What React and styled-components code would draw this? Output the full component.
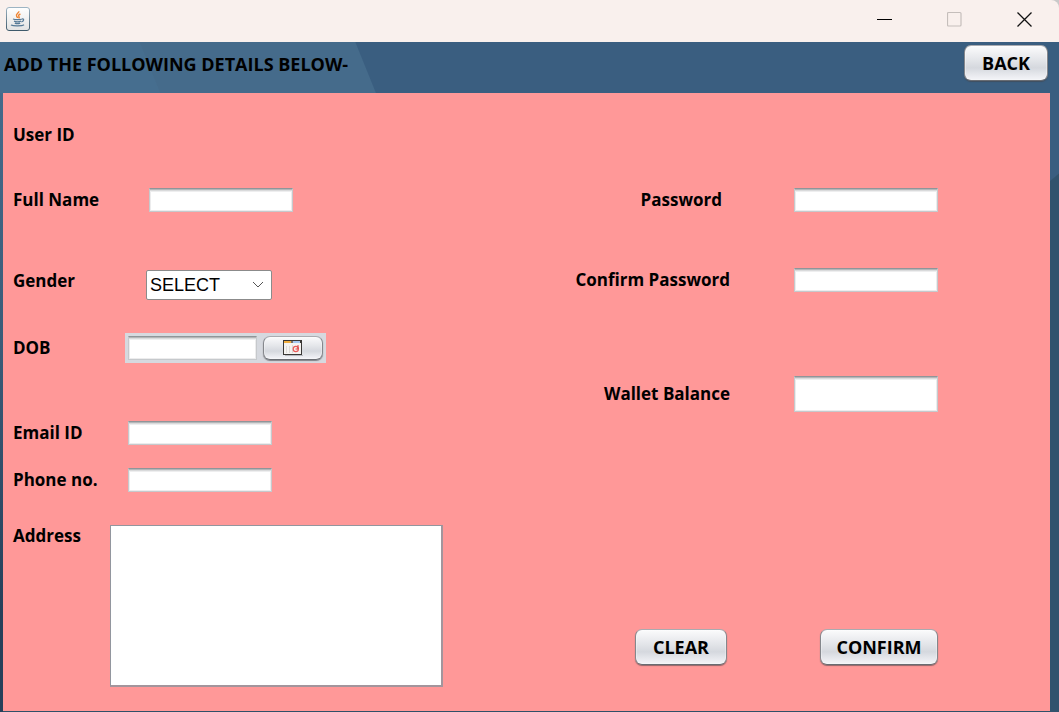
import React from "react";
import styled, { createGlobalStyle } from "styled-components";

const GlobalStyle = createGlobalStyle`
  * { box-sizing: border-box; }
  body {
    margin: 0;
    background: #c9c9c9;
    color: #000;
    font: 700 17px/22px "Open Sans", "Noto Sans", sans-serif;
  }
`;

const Window = styled.div`
  display: flex;
  flex-direction: column;
  min-height: 100vh;
`;

const TitleBar = styled.header`
  display: flex;
  align-items: center;
  justify-content: space-between;
  height: 42px;
  padding: 0 22px 4px 6px;
  background: #f9f0ed;
  border-top-right-radius: 8px;
`;

const WindowControls = styled.div`
  display: flex;
  align-items: center;
  gap: 46px;
`;

const ControlButton = styled.button`
  display: flex;
  align-items: center;
  justify-content: center;
  width: 24px;
  height: 24px;
  padding: 0;
  border: 0;
  background: none;
`;

const Desktop = styled.main`
  flex: 1;
  display: flex;
  flex-direction: column;
  padding: 0 9px 1px 3px;
  background:
    linear-gradient(#466d8e, #3a5b78 45%, #26405a 85%) left top / 3px 100% no-repeat,
    linear-gradient(140deg, #3a5e80 0 106px, #31536d 107px) right top / 9px 100% no-repeat,
    #2f4f69;
`;

const Heading = styled.div`
  display: flex;
  align-items: flex-start;
  justify-content: space-between;
  height: 51px;
  margin: 0 -9px 0 -3px;
  padding: 3px 11px 0 4px;
  background: linear-gradient(68deg, #466e8f 148px, #456b8b 149px 348px, #3a5e80 349px);
`;

const Title = styled.h1`
  margin: 0;
  padding-top: 7px;
  font-size: 18px;
  line-height: 24px;
`;

const PushButton = styled.button`
  display: flex;
  align-items: center;
  justify-content: center;
  width: ${(p) => p.$width}px;
  height: ${(p) => p.$height || 36}px;
  padding: 0;
  border: 1px solid;
  border-color: #a9abb0 #85878c #696c72;
  border-radius: 7px;
  background: linear-gradient(#fbfbfc, #e4e6ea 40%, #d5d8de 64%, #f0f1f5 95%);
  box-shadow: inset 0 0 0 1px rgba(255, 255, 255, 0.3), 0 1px 1px rgba(70, 70, 75, 0.6);
  color: #000;
  font: inherit;
  font-size: 18px;
  line-height: 24px;
`;

const Panel = styled.form`
  flex: 1;
  display: grid;
  grid-template-columns: minmax(0, 1fr) 361px;
  padding: 31px 112px 24px 10px;
  background: #ff9898;
`;

const Column = styled.div`
  display: flex;
  flex-direction: column;
  padding: ${(p) => p.$pad || "0"};
`;

const Row = styled.div`
  display: grid;
  grid-template-columns: ${(p) => p.$label}px auto;
  justify-content: start;
  align-items: ${(p) => p.$align || "center"};
  margin-top: ${(p) => p.$space || 0}px;
`;

const RightRow = styled.div`
  display: flex;
  align-items: center;
  justify-content: flex-end;
  gap: ${(p) => p.$gap || 64}px;
  margin-top: ${(p) => p.$space || 0}px;
`;

const Label = styled.label`
  white-space: nowrap;
`;

const TextField = styled.input`
  width: ${(p) => p.$width || 144}px;
  height: ${(p) => p.$height || 24}px;
  padding: 0 6px;
  border: 1px solid #c6c9cc;
  border-top-color: #8f9599;
  border-radius: 0;
  outline: none;
  background: #fff;
  box-shadow: inset 0 1px 0 #b4b6b8, inset 0 2px 0 #d9dadb, inset 0 3px 0 #eeeeef, inset 1px -1px 0 #ececed, inset -1px 0 0 #ececed;
  font: inherit;
`;

const SelectBox = styled.div`
  position: relative;
  width: 126px;
  height: 30px;

  svg {
    position: absolute;
    top: 11px;
    right: 8px;
    pointer-events: none;
  }
`;

const Select = styled.select`
  appearance: none;
  width: 100%;
  height: 100%;
  padding: 0 24px 0 3px;
  border: 1px solid #8b8b8b;
  border-radius: 2px;
  background: #fff;
  color: #000;
  font: 400 18px/24px "Liberation Sans", sans-serif;
`;

const DatePicker = styled.div`
  display: flex;
  gap: 6px;
  padding: 3px;
  background: #d6d9df;
`;

const TextArea = styled.textarea`
  display: block;
  width: 333px;
  height: 162px;
  padding: 4px;
  border: 1px solid #92969e;
  border-right: 2px solid #a3959c;
  border-bottom: 2px solid #a3959c;
  outline: none;
  resize: none;
  background: #fff;
  font: inherit;
`;

const Actions = styled.div`
  display: flex;
  justify-content: space-between;
  margin-top: auto;
  padding-left: 58px;
`;

const JavaIcon = () => (
  <svg width="24" height="24" viewBox="0 0 24 24" fill="none" aria-hidden="true">
    <defs>
      <linearGradient id="tile" x1="0" y1="0" x2="0" y2="1">
        <stop offset="0" stopColor="#fff" />
        <stop offset="1" stopColor="#e3e3e3" />
      </linearGradient>
      <linearGradient id="edge" x1="0" y1="0" x2="0" y2="1">
        <stop offset="0" stopColor="#9db4c3" />
        <stop offset="1" stopColor="#3f5a6b" />
      </linearGradient>
    </defs>
    <rect x="0.5" y="0.5" width="23" height="23" rx="2.5" fill="url(#tile)" stroke="url(#edge)" />
    <path d="M12.8 4.2c.6 1.8-3.6 2.8-2.2 5 .3.6.9 1 1 1.8M14.4 7c-2 1-2.2 1.6-1.4 2.6.5.6.3 1.2-.4 1.8" stroke="#ee8432" strokeWidth="1.4" />
    <path d="M7 12c2 .8 7 .8 9.2 0M8 14.2c2 .7 5 .7 7 0M8.8 16.2c1.6.6 3.8.6 5.4 0M16 12c2-.6 2.4 2-.6 3" stroke="#567a97" strokeWidth="1.3" />
    <path d="M5 18c2 1.2 11 1.2 13-.2" stroke="#567a97" strokeWidth="1.4" />
  </svg>
);

const CalendarIcon = () => (
  <svg width="20" height="16" viewBox="0 0 20 16" fill="none" aria-hidden="true" shapeRendering="crispEdges">
    <path d="M2 15.5h18V2" stroke="#b8bac0" />
    <rect x="0" y="0" width="19" height="15" fill="#393735" />
    <rect x="1" y="3" width="17" height="11" fill="#f5f3f1" />
    <rect x="1" y="1" width="7" height="2" fill="#f2ae3e" />
    <rect x="8" y="1" width="2" height="2" fill="#77706a" />
    <rect x="10" y="1" width="7" height="2" fill="#a4c6ef" />
    <path d="M3.5 6v7M6.5 6v7M9.5 5v8" stroke="#dedbd8" />
    <g shapeRendering="auto">
      <circle cx="12.8" cy="9" r="2.6" stroke="#ea5a59" strokeWidth="1.2" />
      <path d="M12.5 9h2.5V5" stroke="#d94142" />
    </g>
  </svg>
);

export default function App() {
  return (
    <>
      <GlobalStyle />
      <Window>
        <TitleBar>
          <JavaIcon />
          <WindowControls>
            <ControlButton type="button" aria-label="Minimize">
              <svg width="16" height="16"><path d="M0 8.5h15" stroke="#000" /></svg>
            </ControlButton>
            <ControlButton type="button" aria-label="Maximize" disabled>
              <svg width="16" height="16"><rect x="0.5" y="1.5" width="13.5" height="13.5" rx="1" fill="none" stroke="#c5bebb" strokeWidth="1.2" /></svg>
            </ControlButton>
            <ControlButton type="button" aria-label="Close">
              <svg width="16" height="16"><path d="M0.5 1.5l14 14M14.5 1.5L0.5 15.5" stroke="#111" strokeWidth="1.3" /></svg>
            </ControlButton>
          </WindowControls>
        </TitleBar>
        <Desktop>
          <Heading>
            <Title>ADD THE FOLLOWING DETAILS BELOW-</Title>
            <PushButton type="button" $width={84}>BACK</PushButton>
          </Heading>
          <Panel>
            <Column>
              <Row $label={136}>
                <Label as="span">User ID</Label>
              </Row>
              <Row $label={136} $space={42}>
                <Label htmlFor="name">Full Name</Label>
                <TextField id="name" />
              </Row>
              <Row $label={133} $space={58} $align="start">
                <Label htmlFor="gender">Gender</Label>
                <SelectBox>
                  <Select id="gender">
                    <option>SELECT</option>
                  </Select>
                  <svg width="12" height="8" fill="none"><path d="M1 1l5 5 5-5" stroke="#555" /></svg>
                </SelectBox>
              </Row>
              <Row $label={112} $space={33}>
                <Label htmlFor="dob">DOB</Label>
                <DatePicker>
                  <TextField id="dob" $width={129} />
                  <PushButton type="button" aria-label="Open calendar" $width={60} $height={24}>
                    <CalendarIcon />
                  </PushButton>
                </DatePicker>
              </Row>
              <Row $label={115} $space={58}>
                <Label htmlFor="email">Email ID</Label>
                <TextField id="email" type="email" />
              </Row>
              <Row $label={115} $space={23}>
                <Label htmlFor="phone">Phone no.</Label>
                <TextField id="phone" type="tel" />
              </Row>
              <Row $label={97} $space={33} $align="start">
                <Label htmlFor="address">Address</Label>
                <TextArea id="address" />
              </Row>
            </Column>
            <Column $pad="64px 0 22px">
              <RightRow $gap={72}>
                <Label htmlFor="password">Password</Label>
                <TextField id="password" type="password" />
              </RightRow>
              <RightRow $space={56}>
                <Label htmlFor="confirm">Confirm Password</Label>
                <TextField id="confirm" type="password" />
              </RightRow>
              <RightRow $space={84}>
                <Label htmlFor="balance">Wallet Balance</Label>
                <TextField id="balance" $height={36} />
              </RightRow>
              <Actions>
                <PushButton type="reset" $width={92}>CLEAR</PushButton>
                <PushButton type="button" $width={118}>CONFIRM</PushButton>
              </Actions>
            </Column>
          </Panel>
        </Desktop>
      </Window>
    </>
  );
}
